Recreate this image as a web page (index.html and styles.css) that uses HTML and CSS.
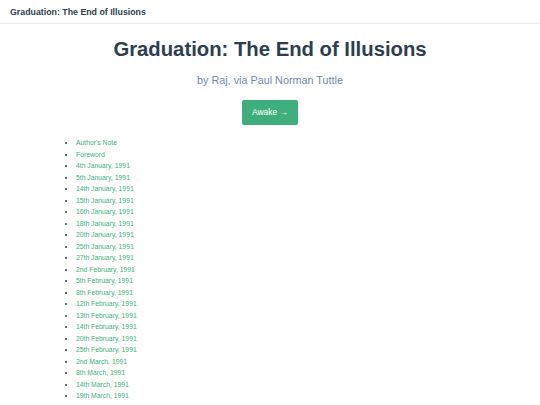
FILE: index.html
```html
<!DOCTYPE html>
<html>
<head>
<meta charset="utf-8">
<link rel="stylesheet" href="styles.css">
</head>
<body>
<header class="navbar"><span class="site-name">Graduation: The End of Illusions</span></header>
<main class="page">
  <section class="hero">
    <h1 class="hero-title">Graduation: The End of Illusions</h1>
    <p class="hero-desc">by Raj, via Paul Norman Tuttle</p>
    <a class="action-button" href="#">Awake →</a>
  </section>
  <ul class="toc">
    <li><a href="#">Author's Note</a></li>
    <li><a href="#">Foreword</a></li>
    <li><a href="#">4th January, 1991</a></li>
    <li><a href="#">5th January, 1991</a></li>
    <li><a href="#">14th January, 1991</a></li>
    <li><a href="#">15th January, 1991</a></li>
    <li><a href="#">16th January, 1991</a></li>
    <li><a href="#">18th January, 1991</a></li>
    <li><a href="#">20th January, 1991</a></li>
    <li><a href="#">25th January, 1991</a></li>
    <li><a href="#">27th January, 1991</a></li>
    <li><a href="#">2nd February, 1991</a></li>
    <li><a href="#">5th February, 1991</a></li>
    <li><a href="#">8th February, 1991</a></li>
    <li><a href="#">12th February, 1991</a></li>
    <li><a href="#">13th February, 1991</a></li>
    <li><a href="#">14th February, 1991</a></li>
    <li><a href="#">20th February, 1991</a></li>
    <li><a href="#">25th February, 1991</a></li>
    <li><a href="#">2nd March, 1991</a></li>
    <li><a href="#">8th March, 1991</a></li>
    <li><a href="#">14th March, 1991</a></li>
    <li><a href="#">19th March, 1991</a></li>
    <li><a href="#">23rd March, 1991</a></li>
    <li><a href="#">28th March, 1991</a></li>
  </ul>
</main>
</body>
</html>
```
FILE: styles.css
```css
html, body {
  margin: 0;
  padding: 0;
  background: #fff;
  color: #2c3e50;
  font-family: "Liberation Sans", Arial, sans-serif;
}
.navbar {
  height: 24px;
  box-sizing: border-box;
  border-bottom: 1px solid #eaecef;
  padding: 0 10px;
  display: flex;
  align-items: center;
}
.site-name {
  font-size: 8.8px;
  font-weight: bold;
  color: #2c3e50;
}
.page {
  padding: 13px 0 0 0;
}
.hero {
  text-align: center;
}
.hero-title {
  margin: 0;
  font-size: 20.3px;
  line-height: 24px;
  font-weight: bold;
}
.hero-desc {
  margin: 12px 0 0 0;
  font-size: 10.8px;
  line-height: 14px;
  color: #6a8bad;
}
.action-button {
  display: inline-block;
  margin-top: 13px;
  width: 56px;
  height: 25px;
  line-height: 25px;
  box-sizing: border-box;
  background: #3eaf7c;
  border-radius: 2px;
  color: #fff;
  font-size: 8.5px;
  text-decoration: none;
}
.toc {
  margin: 12px 0 0 0;
  padding: 0 0 0 76px;
  font-size: 6.8px;
  line-height: 11.5px;
}
.toc a {
  color: #3eaf7c;
  text-decoration: none;
}
```
